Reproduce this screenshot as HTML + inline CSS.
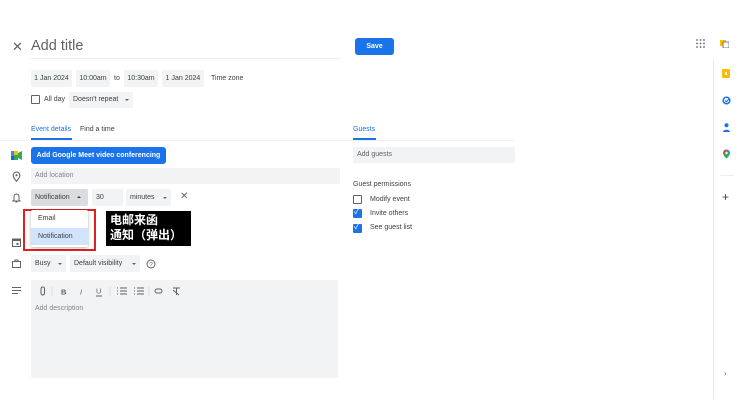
<!DOCTYPE html>
<html><head><meta charset="utf-8"><style>
*{margin:0;padding:0;box-sizing:border-box}
body{width:740px;height:416px;background:#fff;font-family:"Liberation Sans","Noto Sans CJK SC",sans-serif;color:#3c4043;position:relative;overflow:hidden;font-size:8px}
.a{position:absolute;white-space:nowrap}
.chip{position:absolute;white-space:nowrap;background:#f1f3f4;border-radius:2px;font-size:7px;line-height:17px;padding-left:4px;color:#3c4043;overflow:hidden}
.c{text-align:center;padding-left:0}
.cb{position:absolute;width:9px;height:9px;border:1.3px solid #5f6368;border-radius:1px}
.cbc{position:absolute;width:9px;height:9px;background:#1a73e8;border-radius:1px}
.tri{position:absolute;width:0;height:0;border-left:2.5px solid transparent;border-right:2.5px solid transparent;border-top:2.5px solid #5f6368}
</style></head><body>
<div class="a" style="left:12px;top:39px;font-size:13px;color:#5f6368">✕</div>
<div class="a" style="left:31px;top:38px;font-size:14.5px;color:#5f6368">Add title</div>
<div class="a" style="left:31px;top:58px;width:309px;height:1px;background:#eee"></div>
<div class="chip c" style="left:31px;top:70px;width:41px">1 Jan 2024</div>
<div class="chip c" style="left:76px;top:70px;width:34px">10:00am</div>
<div class="a" style="left:114px;top:75px;font-size:7px">to</div>
<div class="chip c" style="left:124px;top:70px;width:34px">10:30am</div>
<div class="chip c" style="left:162px;top:70px;width:42px">1 Jan 2024</div>
<div class="a" style="left:211px;top:75px;font-size:7px">Time zone</div>
<div class="cb" style="left:31px;top:95px"></div>
<div class="a" style="left:44px;top:96px;font-size:7px">All day</div>
<div class="chip" style="left:69px;top:92px;width:64px;line-height:16px">Doesn't repeat</div>
<div class="tri" style="left:125px;top:99px"></div>
<div class="a" style="left:31px;top:126px;font-size:7px;color:#1a73e8">Event details</div>
<div class="a" style="left:80px;top:126px;font-size:7px">Find a time</div>
<div class="a" style="left:31px;top:138px;width:41px;height:2px;background:#1a73e8"></div>
<div class="a" style="left:0;top:140px;width:340px;height:1px;background:#f2f2f2"></div>
<div class="a" style="left:353px;top:126px;font-size:7px;color:#1a73e8">Guests</div>
<div class="a" style="left:353px;top:138px;width:23px;height:2px;background:#1a73e8"></div>
<div class="a" style="left:340px;top:140px;width:175px;height:1px;background:#f2f2f2"></div>
<svg class="a" style="left:11px;top:151px" width="11" height="9"><rect x="0" y="0" width="7" height="9" fill="#fbbc04"/><rect x="0" y="4" width="7" height="5" fill="#34a853"/><rect x="0" y="0" width="3" height="5" fill="#4285f4"/><rect x="0" y="5" width="3" height="4" fill="#1967d2"/><polygon points="7,2 11,0 11,9 7,7" fill="#34a853"/></svg>
<div class="a" style="left:31px;top:147px;width:135px;height:17px;background:#1a73e8;border-radius:3px;color:#fff;font-size:7px;font-weight:bold;line-height:17px;text-align:center">Add Google Meet video conferencing</div>
<svg class="a" style="left:12px;top:171px" width="9" height="11"><path d="M4.5 1a3.3 3.3 0 0 0-3.3 3.3c0 2.5 3.3 6 3.3 6s3.3-3.5 3.3-6A3.3 3.3 0 0 0 4.5 1z" fill="none" stroke="#5f6368" stroke-width="1.1"/><circle cx="4.5" cy="4.3" r="1.1" fill="#5f6368"/></svg>
<div class="chip" style="left:31px;top:168px;width:309px;height:16px;line-height:16px;color:#80868b">Add location</div>
<svg class="a" style="left:12px;top:193px" width="9" height="10"><path d="M4.5 1C2.8 1 2 2.3 2 4v3L1 8h7L7 7V4C7 2.3 6.2 1 4.5 1z" fill="none" stroke="#5f6368" stroke-width="1"/><path d="M3.5 9h2" stroke="#5f6368"/></svg>
<div class="chip" style="left:31px;top:189px;width:57px;background:#dadce0">Notification</div>
<div class="tri" style="left:77px;top:196px;border-top:none;border-bottom:2.5px solid #3c4043"></div>
<div class="chip" style="left:92px;top:189px;width:31px">30</div>
<div class="chip" style="left:126px;top:189px;width:45px">minutes</div>
<div class="tri" style="left:163px;top:197px"></div>
<div class="a" style="left:180px;top:191px;font-size:10px;color:#5f6368">✕</div>
<div class="a" style="left:23px;top:209px;width:73px;height:42px;border:2px solid #e02020"></div>
<div class="a" style="left:31px;top:210px;width:57px;height:37px;background:#fff;box-shadow:0 1px 3px rgba(0,0,0,.3);border-radius:2px"></div>
<div class="a" style="left:38px;top:215px;font-size:7px">Email</div>
<div class="a" style="left:31px;top:228px;width:57px;height:17px;background:#d2e3fc"></div>
<div class="a" style="left:38px;top:233px;font-size:7px">Notification</div>
<div class="a" style="left:106px;top:211px;width:85px;height:35px;background:#000;color:#fff;font-size:12px;font-weight:bold;line-height:15px;padding:2px 0 0 4px">电邮来函<br>通知（弹出）</div>
<svg class="a" style="left:12px;top:238px" width="9" height="9"><rect x="0.5" y="1" width="8" height="7.5" fill="none" stroke="#5f6368"/><rect x="0.5" y="1" width="8" height="2" fill="#5f6368"/><rect x="4.5" y="5" width="2" height="2" fill="#5f6368"/></svg>
<svg class="a" style="left:12px;top:259px" width="9" height="9"><rect x="0.5" y="2.5" width="8" height="6" fill="none" stroke="#5f6368"/><path d="M3 2.5V1h3v1.5" fill="none" stroke="#5f6368"/></svg>
<div class="chip" style="left:31px;top:255px;width:35px">Busy</div>
<div class="tri" style="left:58px;top:263px"></div>
<div class="chip" style="left:70px;top:255px;width:70px">Default visibility</div>
<div class="tri" style="left:132px;top:263px"></div>
<svg class="a" style="left:146px;top:259px" width="10" height="10"><circle cx="5" cy="5" r="4" fill="none" stroke="#5f6368"/><text x="5" y="7.5" font-size="6.5" text-anchor="middle" fill="#5f6368" font-family="Liberation Sans">?</text></svg>
<svg class="a" style="left:12px;top:287px" width="9" height="7"><path d="M0 .5h9M0 3.5h9M0 6.5h6" stroke="#5f6368"/></svg>
<div class="a" style="left:31px;top:280px;width:307px;height:98px;background:#f1f3f4;border-radius:2px"></div>
<svg class="a" style="left:39px;top:286px" width="150" height="11" font-family="Liberation Sans" fill="#5f6368">
<rect x="2" y="1" width="3.5" height="8" rx="1.7" fill="none" stroke="#5f6368"/>
<path d="M13 1v9" stroke="#ddd"/>
<text x="22" y="8.5" font-size="7.5" font-weight="bold">B</text>
<text x="41" y="8.5" font-size="7.5" font-style="italic">I</text>
<text x="57" y="7.5" font-size="7.5">U</text><path d="M57 10h6" stroke="#5f6368"/>
<path d="M71 1v9" stroke="#ddd"/>
<path d="M81 2h7M81 5h7M81 8h7M78 2h1M78 5h1M78 8h1" stroke="#5f6368"/>
<path d="M98 2h7M98 5h7M98 8h7M95 2h1M95 5h1M95 8h1" stroke="#5f6368"/>
<path d="M110 1v9" stroke="#ddd"/>
<rect x="116" y="3" width="7" height="4" rx="2" fill="none" stroke="#5f6368"/>
<path d="M134 2h7M137.5 2v7M134 4l6 5" stroke="#5f6368"/>
</svg>
<div class="a" style="left:35px;top:305px;font-size:7px;color:#80868b">Add description</div>
<div class="a" style="left:355px;top:38px;width:39px;height:17px;background:#1a73e8;border-radius:3px;color:#fff;font-size:7px;font-weight:bold;line-height:17px;text-align:center">Save</div>
<div class="chip" style="left:353px;top:147px;width:162px;height:16px;line-height:16px;color:#5f6368">Add guests</div>
<div class="a" style="left:353px;top:181px;font-size:7px">Guest permissions</div>
<div class="cb" style="left:353px;top:195px"></div>
<div class="a" style="left:370px;top:196px;font-size:7px">Modify event</div>
<div class="cbc" style="left:353px;top:209px"></div>
<div class="a" style="left:354px;top:206px;font-size:8px;color:#fff">✓</div>
<div class="a" style="left:370px;top:210px;font-size:7px">Invite others</div>
<div class="cbc" style="left:353px;top:224px"></div>
<div class="a" style="left:354px;top:221px;font-size:8px;color:#fff">✓</div>
<div class="a" style="left:370px;top:224px;font-size:7px">See guest list</div>
<svg class="a" style="left:696px;top:39px" width="9" height="9" fill="#5f6368"><circle cx="1" cy="1" r=".9"/><circle cx="4.5" cy="1" r=".9"/><circle cx="8" cy="1" r=".9"/><circle cx="1" cy="4.5" r=".9"/><circle cx="4.5" cy="4.5" r=".9"/><circle cx="8" cy="4.5" r=".9"/><circle cx="1" cy="8" r=".9"/><circle cx="4.5" cy="8" r=".9"/><circle cx="8" cy="8" r=".9"/></svg>
<svg class="a" style="left:720px;top:40px" width="9" height="8"><rect x="0" y="0" width="6" height="6" fill="#fbbc04"/><rect x="3" y="2" width="6" height="6" fill="#fff" stroke="#5f6368" stroke-width=".8"/></svg>
<div class="a" style="left:713px;top:59px;width:1px;height:340px;background:#e8e8e8"></div>
<div class="a" style="left:722px;top:69px;width:8px;height:9px;background:#fbbc04;border-radius:1px"></div>
<div class="a" style="left:725px;top:72px;width:2px;height:3px;background:#fff"></div>
<svg class="a" style="left:722px;top:96px" width="9" height="9"><circle cx="4.5" cy="4.5" r="3.3" fill="none" stroke="#1a73e8" stroke-width="1.5"/><path d="M3 4.5l1.3 1.3L7 3" fill="none" stroke="#1a73e8" stroke-width="1.2"/></svg>
<svg class="a" style="left:722px;top:123px" width="9" height="9" fill="#1a73e8"><circle cx="4.5" cy="2.3" r="2"/><path d="M1 9c0-3 7-3 7 0z"/></svg>
<svg class="a" style="left:722px;top:149px" width="9" height="10"><path d="M4.5 0.5a3.5 3.5 0 0 0-3.5 3.5c0 2.5 3.5 5.5 3.5 5.5s3.5-3 3.5-5.5A3.5 3.5 0 0 0 4.5 .5z" fill="#34a853"/><path d="M1 4a3.5 3.5 0 0 1 3.5-3.5V4z" fill="#ea4335"/><path d="M8 4a3.5 3.5 0 0 0-3.5-3.5V4z" fill="#4285f4"/><circle cx="4.5" cy="4" r="1.2" fill="#fff"/></svg>
<div class="a" style="left:720px;top:175px;width:14px;height:1px;background:#eee"></div>
<div class="a" style="left:722px;top:190px;font-size:12px;color:#3c4043">+</div>
<div class="a" style="left:724px;top:369px;font-size:8px;color:#5f6368">›</div>
</body></html>
